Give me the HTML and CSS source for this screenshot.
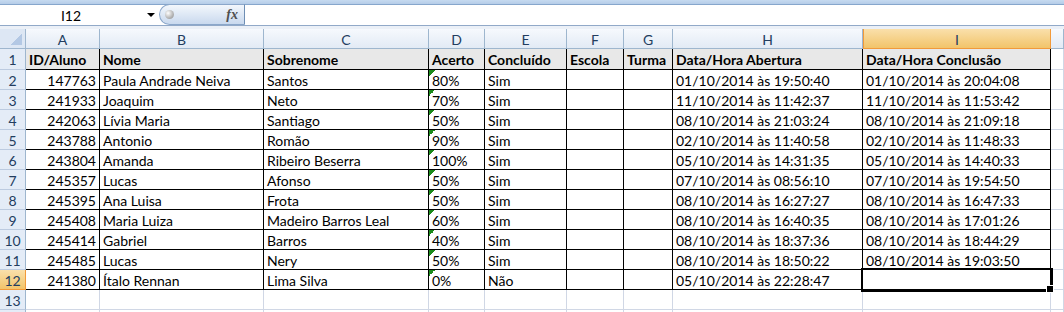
FILE: index.html
```html
<!DOCTYPE html>
<html lang="pt-BR">
<head>
    <meta charset="UTF-8">
    <title>Planilha - Alunos</title>
    <link rel="stylesheet" href="styles.css">
</head>
<body>
    <div class="ribbon"></div>
    <div class="formula-bar">
        <div class="name-box"><span class="ref">I12</span><span class="arrow"></span></div>
        <div class="fx-pill"><span class="knob"></span><span class="fx">fx</span></div>
        <div class="formula-input"></div>
    </div>
    <div class="gap"></div>

    <div class="sheet">
        <div class="c corner"></div><div class="c ch">A</div><div class="c ch">B</div><div class="c ch">C</div><div class="c ch">D</div><div class="c ch">E</div><div class="c ch">F</div><div class="c ch">G</div><div class="c ch">H</div><div class="c ch on">I</div><div class="c ch"></div>

        <div class="c rh">1</div><div class="c d h">ID/Aluno</div><div class="c d h">Nome</div><div class="c d h">Sobrenome</div><div class="c d h">Acerto</div><div class="c d h">Concluído</div><div class="c d h">Escola</div><div class="c d h">Turma</div><div class="c d h">Data/Hora Abertura</div><div class="c d h">Data/Hora Conclusão</div><div class="c"></div>

        <div class="c rh">2</div><div class="c d n">147763</div><div class="c d">Paula Andrade Neiva</div><div class="c d">Santos</div><div class="c d w">80%</div><div class="c d">Sim</div><div class="c d"></div><div class="c d"></div><div class="c d">01/10/2014 às 19:50:40</div><div class="c d">01/10/2014 às 20:04:08</div><div class="c"></div>

        <div class="c rh">3</div><div class="c d n">241933</div><div class="c d">Joaquim</div><div class="c d">Neto</div><div class="c d w">70%</div><div class="c d">Sim</div><div class="c d"></div><div class="c d"></div><div class="c d">11/10/2014 às 11:42:37</div><div class="c d">11/10/2014 às 11:53:42</div><div class="c"></div>

        <div class="c rh">4</div><div class="c d n">242063</div><div class="c d">Lívia Maria</div><div class="c d">Santiago</div><div class="c d w">50%</div><div class="c d">Sim</div><div class="c d"></div><div class="c d"></div><div class="c d">08/10/2014 às 21:03:24</div><div class="c d">08/10/2014 às 21:09:18</div><div class="c"></div>

        <div class="c rh">5</div><div class="c d n">243788</div><div class="c d">Antonio</div><div class="c d">Romão</div><div class="c d w">90%</div><div class="c d">Sim</div><div class="c d"></div><div class="c d"></div><div class="c d">02/10/2014 às 11:40:58</div><div class="c d">02/10/2014 às 11:48:33</div><div class="c"></div>

        <div class="c rh">6</div><div class="c d n">243804</div><div class="c d">Amanda</div><div class="c d">Ribeiro Beserra</div><div class="c d w">100%</div><div class="c d">Sim</div><div class="c d"></div><div class="c d"></div><div class="c d">05/10/2014 às 14:31:35</div><div class="c d">05/10/2014 às 14:40:33</div><div class="c"></div>

        <div class="c rh">7</div><div class="c d n">245357</div><div class="c d">Lucas</div><div class="c d">Afonso</div><div class="c d w">50%</div><div class="c d">Sim</div><div class="c d"></div><div class="c d"></div><div class="c d">07/10/2014 às 08:56:10</div><div class="c d">07/10/2014 às 19:54:50</div><div class="c"></div>

        <div class="c rh">8</div><div class="c d n">245395</div><div class="c d">Ana Luisa</div><div class="c d">Frota</div><div class="c d w">50%</div><div class="c d">Sim</div><div class="c d"></div><div class="c d"></div><div class="c d">08/10/2014 às 16:27:27</div><div class="c d">08/10/2014 às 16:47:33</div><div class="c"></div>

        <div class="c rh">9</div><div class="c d n">245408</div><div class="c d">Maria Luiza</div><div class="c d">Madeiro Barros Leal</div><div class="c d w">60%</div><div class="c d">Sim</div><div class="c d"></div><div class="c d"></div><div class="c d">08/10/2014 às 16:40:35</div><div class="c d">08/10/2014 às 17:01:26</div><div class="c"></div>

        <div class="c rh">10</div><div class="c d n">245414</div><div class="c d">Gabriel</div><div class="c d">Barros</div><div class="c d w">40%</div><div class="c d">Sim</div><div class="c d"></div><div class="c d"></div><div class="c d">08/10/2014 às 18:37:36</div><div class="c d">08/10/2014 às 18:44:29</div><div class="c"></div>

        <div class="c rh">11</div><div class="c d n">245485</div><div class="c d">Lucas</div><div class="c d">Nery</div><div class="c d w">50%</div><div class="c d">Sim</div><div class="c d"></div><div class="c d"></div><div class="c d">08/10/2014 às 18:50:22</div><div class="c d">08/10/2014 às 19:03:50</div><div class="c"></div>

        <div class="c rh on">12</div><div class="c d n">241380</div><div class="c d">Ítalo Rennan</div><div class="c d">Lima Silva</div><div class="c d w">0%</div><div class="c d">Não</div><div class="c d"></div><div class="c d"></div><div class="c d">05/10/2014 às 22:28:47</div><div class="c d sel"></div><div class="c"></div>

        <div class="c rh">13</div><div class="c"></div><div class="c"></div><div class="c"></div><div class="c"></div><div class="c"></div><div class="c"></div><div class="c"></div><div class="c"></div><div class="c"></div><div class="c"></div>

        <div class="c rh"></div><div class="c"></div><div class="c"></div><div class="c"></div><div class="c"></div><div class="c"></div><div class="c"></div><div class="c"></div><div class="c"></div><div class="c"></div><div class="c"></div>
    </div>
</body>
</html>
```

FILE: styles.css
```css
* {
    box-sizing: border-box;
}

body {
    margin: 0;
    font-family: Lato, "Liberation Sans", sans-serif;
    font-size: 14px;
    color: #000;
    background-color: #fff;
    overflow: hidden;
}

/* top of the window */

.ribbon {
    height: 5px;
    background: linear-gradient(#c6daf0, #b5cce8);
    border-bottom: 1px solid #86a6cc;
}

.formula-bar {
    display: flex;
    height: 21px;
    border-bottom: 1px solid #91a9c8;
}

.name-box {
    width: 159px;
    display: flex;
    align-items: center;
}

.name-box .ref {
    width: 142px;
    text-align: center;
}

.arrow {
    border-left: 4px solid transparent;
    border-right: 4px solid transparent;
    border-top: 4px solid #000;
    margin-left: 5px;
}

.fx-pill {
    width: 86px;
    margin-top: -1px;
    display: flex;
    align-items: center;
    justify-content: space-between;
    padding: 0 6px 0 5px;
    border: 1px solid #8ba7ca;
    border-right-color: #6e8eb4;
    border-radius: 11px 0 0 11px;
    background: linear-gradient(#f3f7fc, #c9d9ee);
}

.knob {
    width: 9px;
    height: 9px;
    border-radius: 50%;
    background: radial-gradient(circle at 35% 35%, #ffffff, #b3b3b3 60%, #8c8c8c);
}

.fx {
    font-family: "Liberation Serif", serif;
    font-style: italic;
    font-weight: bold;
    font-size: 14px;
    color: #505050;
}

.formula-input {
    flex: 1;
}

.gap {
    height: 3px;
    background-color: #ebf0f7;
}

/* grid */

.sheet {
    display: grid;
    grid-template-columns: 26px 74px 164px 165px 56px 82px 57px 49px 190px 188px 1fr;
    grid-template-rows: 20px 21px repeat(13, 20px);
}

.c {
    display: flex;
    align-items: center;
    padding: 1px 3px 0 3px;
    white-space: nowrap;
    overflow: hidden;
    border-right: 1px solid #d0d7e5;
    border-bottom: 1px solid #d0d7e5;
}

.corner {
    background: linear-gradient(135deg, transparent 50%, #b3c8e4 50%) no-repeat right 3px bottom 3px / 11px 11px, #dde7f4;
    border-right-color: #9eb6ce;
    border-bottom-color: #9eb6ce;
}

.ch {
    justify-content: center;
    color: #233d5f;
    background: linear-gradient(#f6f9fd, #e2eaf5);
    border-right-color: #9eb6ce;
    border-bottom-color: #9eb6ce;
}

.rh {
    justify-content: center;
    padding: 1px 0 0 0;
    color: #233d5f;
    background-color: #e4ecf7;
    border-right-color: #9eb6ce;
    border-bottom-color: #bccbe0;
}

.ch.on,
.rh.on {
    background: linear-gradient(#fae0ab, #f2c46a);
    border-color: #f29a3a;
}

.ch.on {
    border-left: 1px solid #f29a3a;
}

.d {
    border-right-color: #000;
    border-bottom-color: #000;
}

.h {
    font-weight: bold;
    background-color: #e8e8e8;
}

.n {
    justify-content: flex-end;
}

/* "number stored as text" marker */
.w {
    background: linear-gradient(135deg, #1b8a1b 50%, transparent 50%) no-repeat 0 0 / 6px 6px;
}

.sel {
    position: relative;
    overflow: visible;
    box-shadow: 0 0 0 2px #000, inset 0 0 0 1px #fff;
}

.sel::after {
    content: "";
    position: absolute;
    right: -4px;
    bottom: -4px;
    width: 6px;
    height: 6px;
    background-color: #000;
    border: 1px solid #fff;
}
```
